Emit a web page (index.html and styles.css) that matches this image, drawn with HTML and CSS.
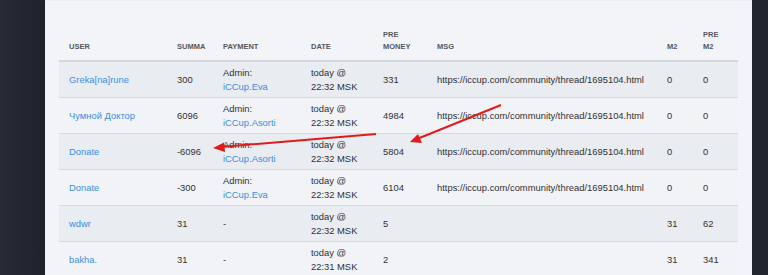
FILE: index.html
```html
<!DOCTYPE html>
<html>
<head>
<meta charset="utf-8">
<link rel="stylesheet" href="styles.css">
</head>
<body>
<div class="page">
  <div class="panel">
    <table class="log">
      <colgroup>
        <col class="c-user"><col class="c-sum"><col class="c-pay"><col class="c-date"><col class="c-pre"><col class="c-msg"><col class="c-m2"><col class="c-pm2">
      </colgroup>
      <thead>
        <tr><th>User</th><th>Summa</th><th>Payment</th><th>Date</th><th>Pre<br>money</th><th>Msg</th><th>M2</th><th>Pre<br>M2</th></tr>
      </thead>
      <tbody>
        <tr><td><a href="#">Greka[na]rune</a></td><td>300</td><td>Admin:<br><a href="#">iCCup.Eva</a></td><td>today @<br>22:32 MSK</td><td>331</td><td>https://iccup.com/community/thread/1695104.html</td><td>0</td><td>0</td></tr>
        <tr><td><a href="#">Чумной Доктор</a></td><td>6096</td><td>Admin:<br><a href="#">iCCup.Asorti</a></td><td>today @<br>22:32 MSK</td><td>4984</td><td>https://iccup.com/community/thread/1695104.html</td><td>0</td><td>0</td></tr>
        <tr><td><a href="#">Donate</a></td><td>-6096</td><td>Admin:<br><a href="#">iCCup.Asorti</a></td><td>today @<br>22:32 MSK</td><td>5804</td><td>https://iccup.com/community/thread/1695104.html</td><td>0</td><td>0</td></tr>
        <tr><td><a href="#">Donate</a></td><td>-300</td><td>Admin:<br><a href="#">iCCup.Eva</a></td><td>today @<br>22:32 MSK</td><td>6104</td><td>https://iccup.com/community/thread/1695104.html</td><td>0</td><td>0</td></tr>
        <tr><td><a href="#">wdwr</a></td><td>31</td><td>-</td><td>today @<br>22:32 MSK</td><td>5</td><td></td><td>31</td><td>62</td></tr>
        <tr><td><a href="#">bakha.</a></td><td>31</td><td>-</td><td>today @<br>22:31 MSK</td><td>2</td><td></td><td>31</td><td>341</td></tr>
      </tbody>
    </table>
  </div>
  <svg class="arrows" width="768" height="275" viewBox="0 0 768 275">
    <line x1="376" y1="134" x2="220" y2="147" stroke="#e01b1b" stroke-width="2"/>
    <polygon points="213,148 224,142.5 225,152" fill="#e01b1b"/>
    <line x1="501" y1="105" x2="417" y2="139" stroke="#e01b1b" stroke-width="2"/>
    <polygon points="410,142 418,134 422,143" fill="#e01b1b"/>
  </svg>
</div>
</body>
</html>
```
FILE: styles.css
```css
html, body {
  margin: 0;
  padding: 0;
}
body {
  background: #23262f;
  font-family: "Liberation Sans", Arial, sans-serif;
  width: 768px;
  height: 275px;
  overflow: hidden;
}
.page {
  position: relative;
  width: 768px;
  height: 275px;
  overflow: hidden;
  background: linear-gradient(90deg, #272b36 0%, #1f222b 6%, #23262f 100%);
}
.panel {
  margin-left: 45px;
  width: 707px;
  height: 275px;
  box-sizing: border-box;
  padding: 20px 14px 0 14px;
  background: #f3f4f8;
  border-top: 1px solid #eceef2;
}
.log {
  width: 679px;
  border-collapse: collapse;
  table-layout: fixed;
}
.c-user { width: 108px; }
.c-sum { width: 46px; }
.c-pay { width: 88px; }
.c-date { width: 72px; }
.c-pre { width: 54px; }
.c-msg { width: 230px; }
.c-m2 { width: 36px; }
.c-pm2 { width: 45px; }
.log th {
  text-align: left;
  vertical-align: bottom;
  font-size: 7.5px;
  font-weight: bold;
  text-transform: uppercase;
  color: #55585e;
  line-height: 12px;
  padding: 8px 0 7px 10px;
  border-bottom: 2px solid #d3d6db;
}
.log td {
  font-size: 9.4px;
  line-height: 14px;
  color: #2f3134;
  padding: 4px 0 3px 10px;
  vertical-align: middle;
  border-bottom: 1px solid #d7dae0;
  white-space: nowrap;
}
.log tbody tr:nth-child(odd) td {
  background: #e9ecf0;
}
.log tbody tr:nth-child(even) td {
  background: #f2f3f7;
}
.log a {
  color: #3b8ee3;
  text-decoration: none;
}
.arrows {
  position: absolute;
  left: 0;
  top: 0;
  pointer-events: none;
}
```
